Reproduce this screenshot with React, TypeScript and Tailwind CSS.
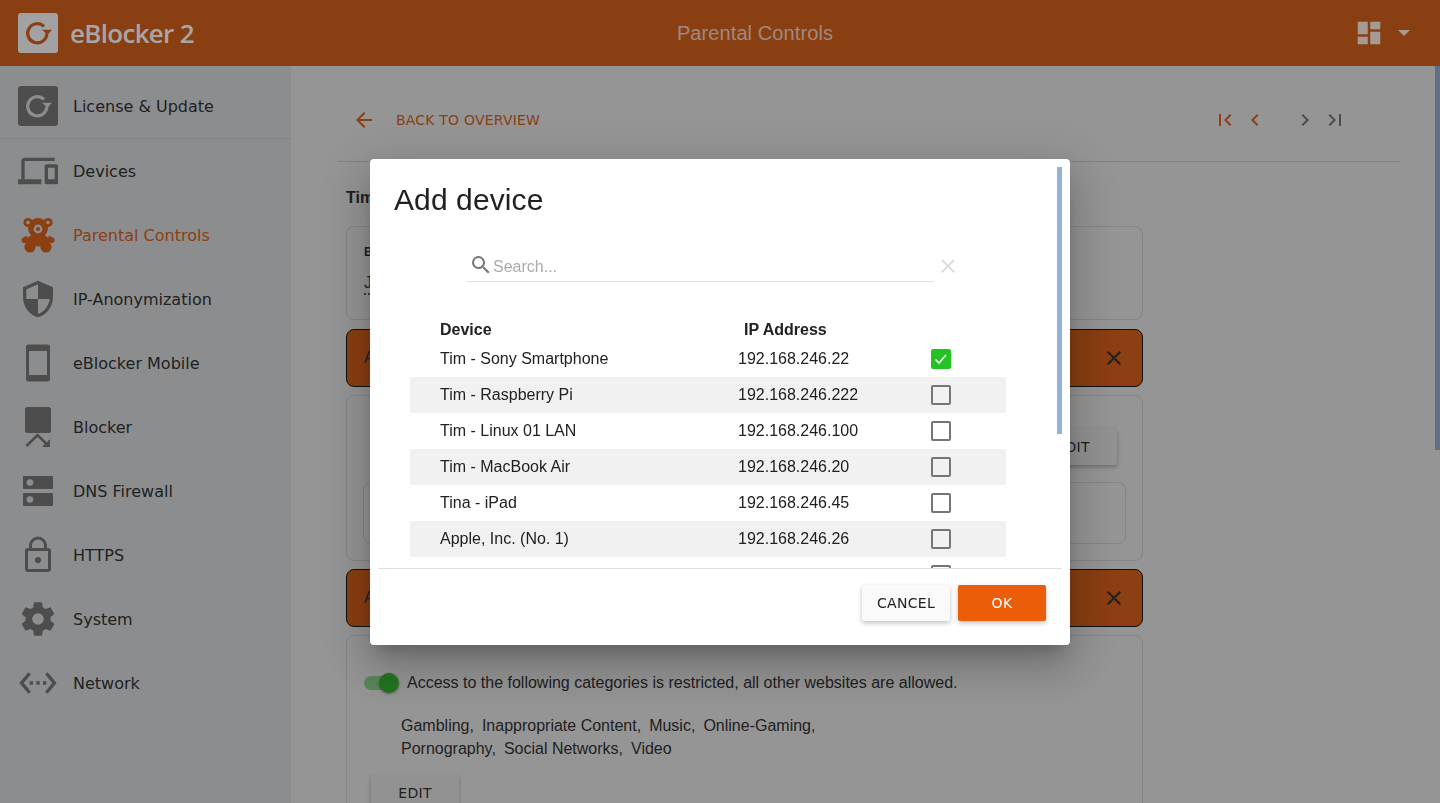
import type { ReactNode } from 'react';

const closePath = 'M19 6.41L17.59 5 12 10.59 6.41 5 5 6.41 10.59 12 5 17.59 6.41 19 12 13.41 17.59 19 19 17.59 13.41 12z';

function Mdi({ d, size = 24, box = 24, className = '' }: { d: string; size?: number; box?: number; className?: string }) {
  return (
    <svg width={size} height={size} viewBox={`0 0 ${box} ${box}`} fill="currentColor" className={className}>
      <path d={d} />
    </svg>
  );
}

function LogoMark({ square, ring }: { square: string; ring: string }) {
  return (
    <svg width="40" height="40" viewBox="0 0 40 40">
      <rect width="40" height="40" rx="3" fill={square} />
      <path d="M26 13.4A9.6 9.6 0 1 0 28.9 20.5" fill="none" stroke={ring} strokeWidth="3.2" />
      <path d="M24 16.8h10l-4.5 5z" fill={ring} />
    </svg>
  );
}

function TeddyIcon() {
  return (
    <svg width="40" height="40" viewBox="0 0 40 40" fill="currentColor">
      <circle cx="10" cy="7.5" r="4.6" />
      <circle cx="30" cy="7.5" r="4.6" />
      <circle cx="20" cy="13" r="10" />
      <path d="M9 20.5L5.5 22.5a2.8 2.8 0 0 0 1.5 5.4l4-.6zM31 20.5l3.5 2a2.8 2.8 0 0 1-1.5 5.4l-4-.6z" />
      <ellipse cx="20" cy="25" rx="10.5" ry="6.5" />
      <circle cx="12" cy="32" r="5.6" />
      <circle cx="28" cy="32" r="5.6" />
      <circle cx="10" cy="7.5" r="1.8" fill="#eef0f2" />
      <circle cx="30" cy="7.5" r="1.8" fill="#eef0f2" />
      <circle cx="20" cy="14" r="4.4" fill="#eef0f2" />
      <circle cx="20" cy="14" r="2" />
    </svg>
  );
}

function BlockerIcon() {
  return (
    <svg width="40" height="40" viewBox="0 0 40 40" fill="currentColor">
      <rect x="7" y="0" width="26" height="26" rx="2.5" />
      <path d="M8.5 39l11-11 9.5 9.5" fill="none" stroke="currentColor" strokeWidth="2.6" />
      <path d="M32 32v8h-8z" />
    </svg>
  );
}

function LockIcon() {
  return (
    <svg width="40" height="40" viewBox="0 0 40 40" fill="none" stroke="currentColor">
      <rect x="8.5" y="14.5" width="23" height="21" rx="1.5" strokeWidth="3" />
      <path d="M12.5 14.5V10.5a7.5 7.5 0 0 1 15 0V14.5" strokeWidth="3" />
      <circle cx="20" cy="25" r="3.1" fill="currentColor" stroke="none" />
    </svg>
  );
}

function ServerIcon() {
  return (
    <svg width="40" height="40" viewBox="0 0 40 40" fill="currentColor">
      <path fillRule="evenodd" d="M6 5h28a1 1 0 0 1 1 1v11a1 1 0 0 1-1 1H6a1 1 0 0 1-1-1V6a1 1 0 0 1 1-1zm6 3.2a3.3 3.3 0 1 0 0 6.6 3.3 3.3 0 0 0 0-6.6zM6 22h28a1 1 0 0 1 1 1v11a1 1 0 0 1-1 1H6a1 1 0 0 1-1-1V23a1 1 0 0 1 1-1zm6 3.2a3.3 3.3 0 1 0 0 6.6 3.3 3.3 0 0 0 0-6.6z" />
    </svg>
  );
}

function PhoneIcon() {
  return (
    <svg width="40" height="40" viewBox="0 0 40 40" fill="currentColor">
      <path fillRule="evenodd" d="M10.5 1.5h19a2.5 2.5 0 0 1 2.5 2.5v32a2.5 2.5 0 0 1-2.5 2.5h-19a2.5 2.5 0 0 1-2.5-2.5V4a2.5 2.5 0 0 1 2.5-2.5zM11 8v24h18V8z" />
    </svg>
  );
}

const nav: { label: string; icon: ReactNode; active?: boolean }[] = [
  { label: 'Devices', icon: <Mdi size={40} d="M4 6h18V4H4c-1.1 0-2 .9-2 2v11H0v3h14v-3H4V6zm19 2h-6c-.55 0-1 .45-1 1v10c0 .55.45 1 1 1h6c.55 0 1-.45 1-1V9c0-.55-.45-1-1-1zm-1 9h-4v-7h4v7z" /> },
  { label: 'Parental Controls', icon: <TeddyIcon />, active: true },
  { label: 'IP-Anonymization', icon: <Mdi size={40} d="M12,1L3,5V11C3,16.55 6.84,21.74 12,23C17.16,21.74 21,16.55 21,11V5L12,1M12,12H19C18.47,16.11 15.72,19.78 12,20.92V12H5V6.3L12,3.19V12Z" /> },
  { label: 'eBlocker Mobile', icon: <PhoneIcon /> },
  { label: 'Blocker', icon: <BlockerIcon /> },
  { label: 'DNS Firewall', icon: <ServerIcon /> },
  { label: 'HTTPS', icon: <LockIcon /> },
  { label: 'System', icon: <Mdi size={40} d="M12,15.5A3.5,3.5 0 0,1 8.5,12A3.5,3.5 0 0,1 12,8.5A3.5,3.5 0 0,1 15.5,12A3.5,3.5 0 0,1 12,15.5M19.43,12.97C19.47,12.65 19.5,12.33 19.5,12C19.5,11.67 19.47,11.34 19.43,11L21.54,9.37C21.73,9.22 21.78,8.95 21.66,8.73L19.66,5.27C19.54,5.05 19.27,4.96 19.05,5.05L16.56,6.05C16.04,5.66 15.5,5.32 14.87,5.07L14.5,2.42C14.46,2.18 14.25,2 14,2H10C9.75,2 9.54,2.18 9.5,2.42L9.13,5.07C8.5,5.32 7.96,5.66 7.44,6.05L4.95,5.05C4.73,4.96 4.46,5.05 4.34,5.27L2.34,8.73C2.21,8.95 2.27,9.22 2.46,9.37L4.57,11C4.53,11.34 4.5,11.67 4.5,12C4.5,12.33 4.53,12.65 4.57,12.97L2.46,14.63C2.27,14.78 2.21,15.05 2.34,15.27L4.34,18.73C4.46,18.95 4.73,19.03 4.95,18.95L7.44,17.94C7.96,18.34 8.5,18.68 9.13,18.93L9.5,21.58C9.54,21.82 9.75,22 10,22H14C14.25,22 14.46,21.82 14.5,21.58L14.87,18.93C15.5,18.67 16.04,18.34 16.56,17.94L19.05,18.95C19.27,19.03 19.54,18.95 19.66,18.73L21.66,15.27C21.78,15.05 21.73,14.78 21.54,14.63L19.43,12.97Z" /> },
  { label: 'Network', icon: <Mdi size={40} d="M7.77 6.76L6.23 5.48.82 12l5.41 6.52 1.54-1.28L3.42 12l4.35-5.24zM7 13h2v-2H7v2zm10-2h-2v2h2v-2zm-6 2h2v-2h-2v2zm6.77-7.52l-1.54 1.28L20.58 12l-4.35 5.24 1.54 1.28L23.18 12l-5.41-6.52z" /> },
];

const devices = [
  { name: 'Tim - Sony Smartphone', ip: '192.168.246.22', checked: true },
  { name: 'Tim - Raspberry Pi', ip: '192.168.246.222' },
  { name: 'Tim - Linux 01 LAN', ip: '192.168.246.100' },
  { name: 'Tim - MacBook Air', ip: '192.168.246.20' },
  { name: 'Tina - iPad', ip: '192.168.246.45' },
  { name: 'Apple, Inc. (No. 1)', ip: '192.168.246.26' },
  { name: '', ip: '' },
];

function OrangeBar() {
  return (
    <div className="h-[58px] rounded-lg border border-black bg-[#eb5a04] flex items-center justify-between pl-[17px] pr-[16px] text-[#212121]">
      <span>A</span>
      <Mdi d={closePath} className="text-[#212121]" />
    </div>
  );
}

function Sidebar() {
  return (
    <aside className="w-[291px] shrink-0 bg-[#eef0f2] shadow-[2px_0_4px_rgba(0,0,0,0.25)] font-['DejaVu_Sans',sans-serif] text-[16px] text-[#212121]">
      <div className="h-[73px] pt-[20px] pl-[18px] flex items-start gap-[15px] border-b border-[#dcdcdc]">
        <LogoMark square="#757575" ring="#eef0f2" />
        <span className="leading-[40px] pt-[1px]">License &amp; Update</span>
      </div>
      {nav.map(item => (
        <div key={item.label} className={`h-[64px] pl-[18px] flex items-center gap-[15px] ${item.active ? 'text-[#eb5a04]' : ''}`}>
          <div className={`w-[40px] h-[40px] flex items-center justify-center ${item.active ? 'text-[#eb5a04]' : 'text-[#757575]'}`}>{item.icon}</div>
          <span className="pt-[2px]">{item.label}</span>
        </div>
      ))}
    </aside>
  );
}

function MainContent() {
  return (
    <main className="relative flex-1 min-w-0 overflow-hidden bg-white font-['Liberation_Sans',sans-serif] text-[16px] text-[#212121] pl-[47px] pr-[40px] pt-[32px]">
      <div className="h-[44px] flex items-center justify-between pr-[53px]">
        <div className="flex items-center text-[#eb5a04]">
          <div className="w-[24px] ml-[14px]"><Mdi d="M20 11H7.83l5.59-5.59L12 4l-8 8 8 8 1.41-1.41L7.83 13H20v-2z" /></div>
          <span className="ml-[20px] font-['DejaVu_Sans',sans-serif] text-[14px] tracking-[0.2px]">BACK TO OVERVIEW</span>
        </div>
        <div className="flex items-center">
          <Mdi d="M18.41 16.59L13.82 12l4.59-4.59L17 6l-6 6 6 6zM6 6h2v12H6z" className="text-[#eb5a04]" />
          <Mdi d="M15.41 7.41L14 6l-6 6 6 6 1.41-1.41L10.83 12z" className="ml-[6px] text-[#eb5a04]" />
          <Mdi d="M10 6L8.59 7.41 13.17 12l-4.58 4.59L10 18l6-6z" className="ml-[26px] text-[#757575]" />
          <Mdi d="M5.59 7.41L10.18 12l-4.59 4.59L7 18l6-6-6-6zM16 6h2v12h-2z" className="ml-[6px] text-[#757575]" />
        </div>
      </div>
      <div className="mt-[19px] border-t border-[#dcdcdc]" />
      <div className="ml-[8px] w-[797px]">
        <h2 className="mt-[26px] font-bold leading-[20px]">Tim</h2>
        <div className="mt-[18px] h-[94px] rounded-lg border border-[#e0e0e0] pl-[17px] pt-[18px]">
          <div className="text-[12px] font-bold leading-[14px]">B</div>
          <div className="mt-[14px] leading-[20px] underline decoration-dotted underline-offset-[6px]">J</div>
        </div>
        <div className="mt-[9px]"><OrangeBar /></div>
        <div className="mt-[8px] h-[166px] rounded-lg border border-[#e0e0e0] pl-[16px] pr-[16px] pt-[33px]">
          <div className="flex justify-end pr-[9px]">
            <div className="w-[88px] h-[36px] rounded-[2px] bg-[#fafafa] shadow-[0_2px_4px_rgba(0,0,0,0.3)] flex items-center justify-center font-['DejaVu_Sans',sans-serif] text-[14px] tracking-[0.3px]">EDIT</div>
          </div>
          <div className="mt-[17px] h-[62px] rounded-lg border border-[#e0e0e0]" />
        </div>
        <div className="mt-[8px]"><OrangeBar /></div>
        <div className="mt-[8px] h-[300px] rounded-lg border border-[#e0e0e0] pl-[17px] pt-[35px]">
          <div className="flex items-center">
            <div className="relative w-[36px] h-[20px] flex items-center">
              <div className="w-[34px] h-[14px] rounded-full bg-[#22c322]/50" />
              <div className="absolute left-[15px] top-0 w-[20px] h-[20px] rounded-full bg-[#22c322] shadow-[0_1px_3px_rgba(0,0,0,0.4)]" />
            </div>
            <span className="ml-[7px] leading-[23px]">Access to the following categories is restricted, all other websites are allowed.</span>
          </div>
          <div className="ml-[37px] mt-[20px] leading-[23px]">
            <div className="flex gap-[8px]"><span>Gambling,</span><span>Inappropriate Content,</span><span>Music,</span><span>Online-Gaming,</span></div>
            <div className="flex gap-[8px]"><span>Pornography,</span><span>Social Networks,</span><span>Video</span></div>
          </div>
          <div className="ml-[7px] mt-[15px] w-[88px] h-[36px] rounded-[2px] bg-[#fafafa] shadow-[0_2px_4px_rgba(0,0,0,0.3)] flex items-center justify-center font-['DejaVu_Sans',sans-serif] text-[14px] tracking-[0.3px]">EDIT</div>
        </div>
      </div>
      <div className="absolute right-0 top-0 w-[5px] h-[384px] bg-[#98b9e3]" />
    </main>
  );
}

function AddDeviceDialog() {
  return (
    <div className="fixed inset-x-0 top-[66px] bottom-0 z-40 bg-[rgba(33,33,33,0.48)]">
      <div className="absolute left-[370px] top-[93px] w-[700px] h-[486px] rounded-[4px] bg-white shadow-[0_11px_15px_-7px_rgba(0,0,0,0.2),0_24px_38px_3px_rgba(0,0,0,0.14),0_9px_46px_8px_rgba(0,0,0,0.12)] flex flex-col font-['Liberation_Sans',sans-serif] text-[#212121]">
        <div className="relative h-[409px] overflow-hidden shrink-0">
          <h1 className="pl-[24px] pt-[22px] text-[30px] leading-[38px] tracking-[0.1px]">Add device</h1>
          <div className="mt-[30px] ml-[97px] flex items-start">
            <div className="w-[467px] h-[33px] border-b border-[#e0e0e0] flex items-center pl-[2px] pt-[4px] text-[#757575]">
              <Mdi d="M9.5,3A6.5,6.5 0 0,1 16,9.5C16,11.11 15.41,12.59 14.44,13.73L14.71,14H15.5L20.5,19L19,20.5L14,15.5V14.71L13.73,14.44C12.59,15.41 11.11,16 9.5,16A6.5,6.5 0 0,1 3,9.5A6.5,6.5 0 0,1 9.5,3M9.5,5C7,5 5,7 5,9.5C5,12 7,14 9.5,14C12,14 14,12 14,9.5C14,7 12,5 9.5,5Z" className="-mt-[5px]" />
              <span className="text-[16px] text-[#aaaaaa]">Search...</span>
            </div>
            <Mdi d={closePath} className="ml-[2px] mt-[5px] text-[#dddddd]" />
          </div>
          <div className="ml-[40px] mr-[64px] mt-[37px] text-[16px]">
            <div className="h-[22px] flex font-bold leading-[22px]">
              <div className="w-[334px] pl-[30px]">Device</div>
              <div>IP Address</div>
            </div>
            {devices.map((d, i) => (
              <div key={i} className={`h-[36px] flex items-center ${i % 2 === 1 ? 'bg-[#f1f1f1]' : ''}`}>
                <div className="w-[328px] pl-[30px]">{d.name}</div>
                <div className="w-[193px]">{d.ip}</div>
                {d.checked ? (
                  <div className="w-[20px] h-[20px] rounded-[2px] bg-[#22c322] flex items-center justify-center">
                    <svg width="16" height="16" viewBox="0 0 16 16" fill="none" stroke="white" strokeWidth="1.6"><path d="M2.5 8.5l3.5 3.5 7-8" /></svg>
                  </div>
                ) : (
                  <div className="w-[20px] h-[20px] rounded-[2px] border-2 border-[#757575]" />
                )}
              </div>
            ))}
          </div>
          <div className="absolute right-[8px] top-[8px] w-[5px] h-[267px] bg-[#92b2dc]" />
        </div>
        <div className="mx-[8px] border-t border-[#e0e0e0]" />
        <div className="flex-1 flex justify-end items-start pt-[16px] pr-[24px] gap-[8px] font-['DejaVu_Sans',sans-serif] text-[14px] tracking-[0.3px]">
          <button className="w-[88px] h-[36px] rounded-[2px] bg-[#fafafa] shadow-[0_2px_5px_rgba(0,0,0,0.26)]">CANCEL</button>
          <button className="w-[88px] h-[36px] rounded-[2px] bg-[#ec5d0a] text-white shadow-[0_2px_5px_rgba(0,0,0,0.26)]">OK</button>
        </div>
      </div>
    </div>
  );
}

export default function App() {
  return (
    <div className="h-screen overflow-hidden flex flex-col">
      <header className="relative z-50 h-[66px] shrink-0 bg-[#8a3f12] flex items-center">
        <div className="w-[291px] pl-[18px] flex items-center gap-[12px]">
          <LogoMark square="#a2a2a2" ring="#8a3f12" />
          <span className="font-['Open_Sans',sans-serif] font-semibold text-[26px] tracking-[-0.7px] text-[#a6a6a6]">eBlocker 2</span>
        </div>
        <div className="flex-1 text-center font-['Liberation_Sans',sans-serif] text-[20px] tracking-[0.1px] text-[#a08a7e]">Parental Controls</div>
        <div className="w-[221px] flex items-center justify-end pr-[30px] text-[#a69a94]">
          <Mdi size={30} d="M13,3V9H21V3M13,21H21V11H13M3,21H11V15H3M3,13H11V3H3V13Z" />
          <svg width="12" height="6" viewBox="0 0 12 6" fill="currentColor" className="ml-[14px]"><path d="M0 0h12L6 6z" /></svg>
        </div>
      </header>
      <div className="flex-1 min-h-0 flex">
        <Sidebar />
        <MainContent />
      </div>
      <AddDeviceDialog />
    </div>
  );
}
